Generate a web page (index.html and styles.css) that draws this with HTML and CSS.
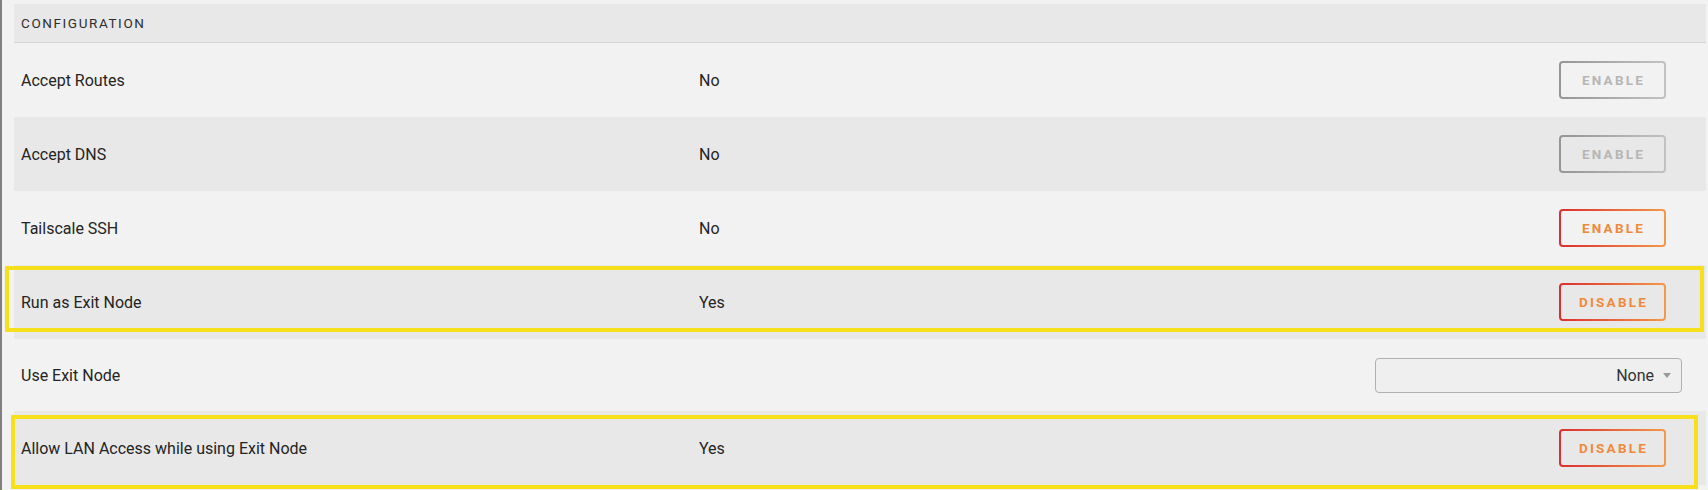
FILE: index.html
```html
<!DOCTYPE html>
<html>
  <head>
    <meta name="viewport" content="width=device-width, initial-scale=1.0">
    <link rel="stylesheet" href="styles.css">
  </head>
  <body>
    <div class="page">
      <div class="section">
        <div class="section-head">Configuration</div>

        <div class="row">
          <div class="cell label">Accept Routes</div>
          <div class="cell value">No</div>
          <div class="cell action"><button class="btn btn-off">Enable</button></div>
        </div>

        <div class="row">
          <div class="cell label">Accept DNS</div>
          <div class="cell value">No</div>
          <div class="cell action"><button class="btn btn-off">Enable</button></div>
        </div>

        <div class="row">
          <div class="cell label">Tailscale SSH</div>
          <div class="cell value">No</div>
          <div class="cell action"><button class="btn">Enable</button></div>
        </div>

        <div class="row">
          <div class="cell label">Run as Exit Node</div>
          <div class="cell value">Yes</div>
          <div class="cell action"><button class="btn">Disable</button></div>
          <div class="mark mark-a"></div>
        </div>

        <div class="row row-select">
          <div class="cell label">Use Exit Node</div>
          <div class="cell value"></div>
          <div class="cell action">
            <div class="select">None <span class="caret"></span></div>
          </div>
        </div>

        <div class="row">
          <div class="cell label">Allow LAN Access while using Exit Node</div>
          <div class="cell value">Yes</div>
          <div class="cell action"><button class="btn">Disable</button></div>
          <div class="mark mark-b"></div>
        </div>
      </div>
    </div>
  </body>
</html>
```

FILE: styles.css
```css
/* Page */
body {
  margin: 0;
  background-color: #f2f2f2;
  font-family: Roboto, "Liberation Sans", sans-serif;
  color: #242424;
  height: 490px;
  overflow: hidden;
}

.page {
  border-left: 2px solid #808080;
  height: 490px;
  padding: 4px 2px 0 12px;
}

/* Section header */
.section-head {
  height: 38px;
  line-height: 38px;
  background-color: #e8e8e8;
  border-bottom: 1px solid #d4d4d4;
  padding-left: 7px;
  font-size: 13.5px;
  letter-spacing: 1.6px;
  text-transform: uppercase;
  color: #2e2e2e;
}

/* Rows */
.row {
  --row-bg: #f2f2f2;
  position: relative;
  display: grid;
  grid-template-columns: 678px 1fr auto;
  align-items: center;
  height: 74px;
  background-color: var(--row-bg);
  font-size: 16px;
}

.row:nth-of-type(odd) {
  --row-bg: #e8e8e8;
}

.row-select {
  height: 72px;
}

.cell {
  padding-left: 7px;
}

.action {
  padding-right: 24px;
}

/* Buttons */
.btn {
  width: 107px;
  height: 38px;
  margin-right: 16px;
  border: 2px solid transparent;
  border-radius: 4px;
  background: linear-gradient(var(--row-bg), var(--row-bg)) padding-box,
              linear-gradient(90deg, #da2e30, #f39a48) border-box;
  color: #ef8a3c;
  font-family: Roboto, "Liberation Sans", sans-serif;
  font-size: 13.5px;
  font-weight: bold;
  letter-spacing: 2.2px;
  text-transform: uppercase;
  padding: 0 0 0 2px;
}

.btn-off {
  background: linear-gradient(var(--row-bg), var(--row-bg)) padding-box,
              linear-gradient(90deg, #959595, #c2c2c2) border-box;
  color: #b6b6b6;
}

/* Dropdown */
.select {
  width: 307px;
  height: 35px;
  box-sizing: border-box;
  border: 1px solid #b0b0b0;
  border-radius: 4px;
  background-color: #efefef;
  display: flex;
  align-items: center;
  justify-content: flex-end;
  padding-right: 10px;
  color: #333333;
}

.caret {
  margin-left: 9px;
  width: 0;
  height: 0;
  border-left: 4px solid transparent;
  border-right: 4px solid transparent;
  border-top: 5px solid #999999;
}

/* Highlight markers drawn over the rows */
.mark {
  position: absolute;
  border: 4px solid #f6e01c;
  pointer-events: none;
}

.mark-a {
  left: -9px;
  right: 2px;
  top: 1px;
  bottom: 7px;
}

.mark-b {
  left: -3px;
  right: 8px;
  top: 4px;
  bottom: -4px;
}
```
